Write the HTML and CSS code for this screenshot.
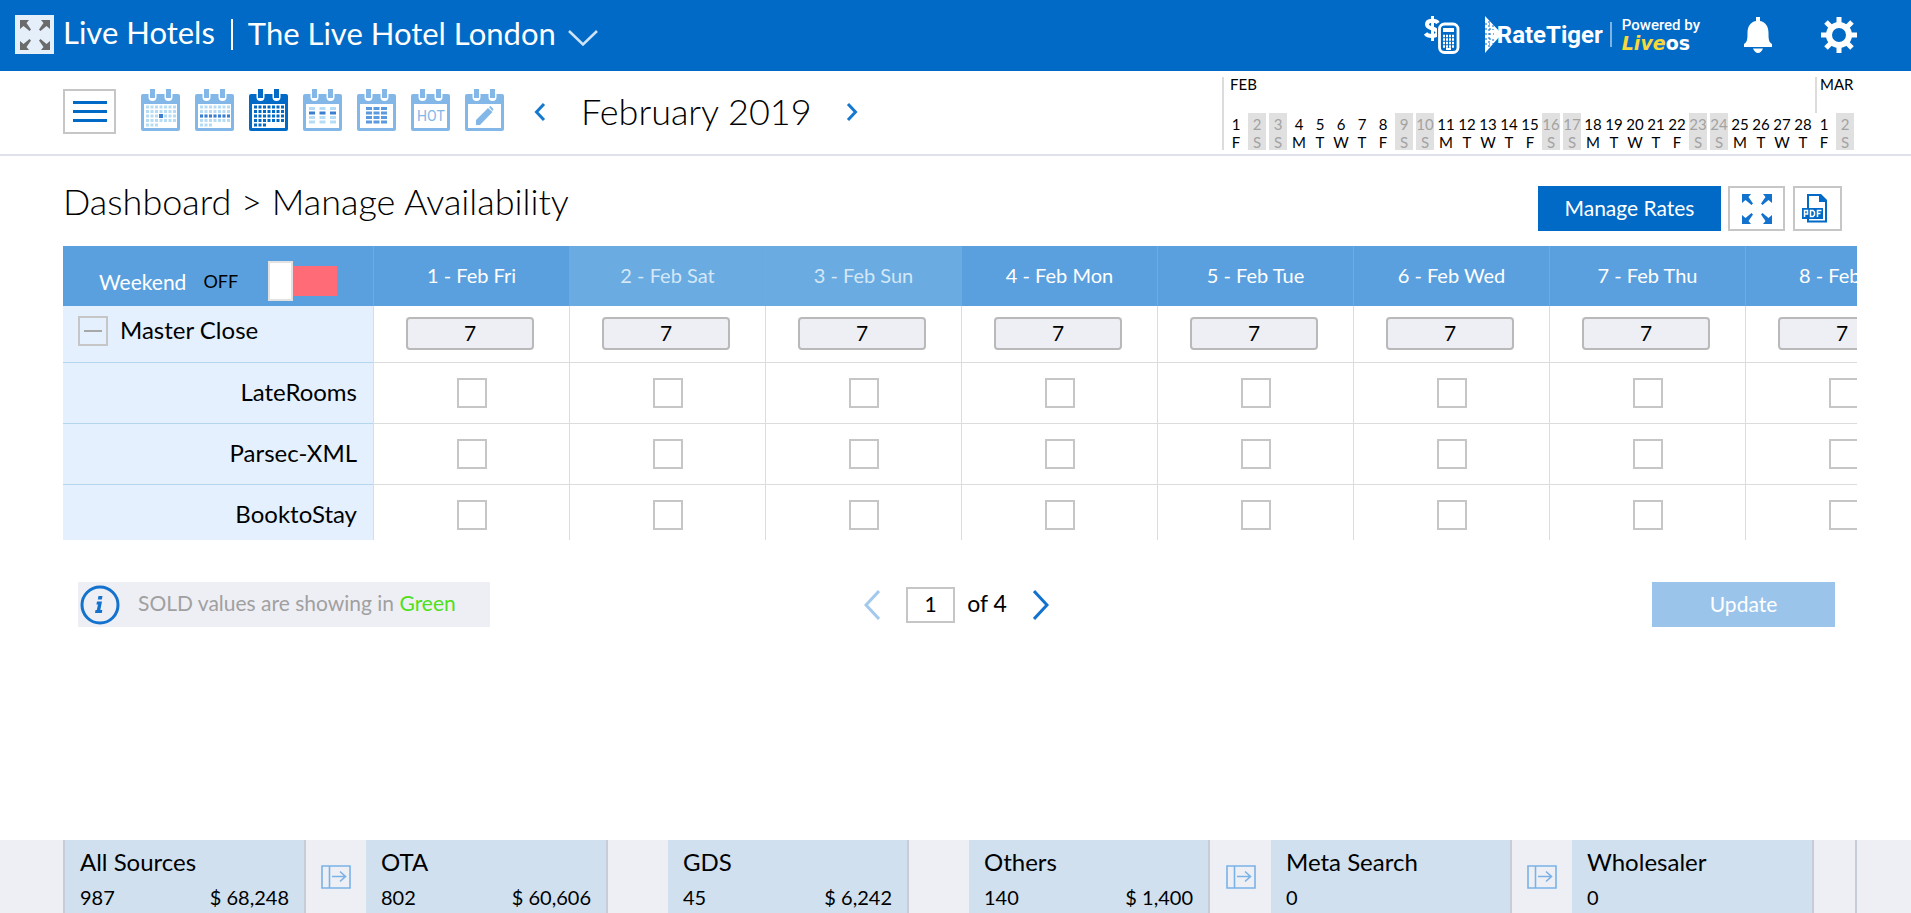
FILE: index.html
```html
<!DOCTYPE html>
<html lang="en">
<head>
<meta charset="utf-8">
<meta name="viewport" content="width=device-width, initial-scale=1">
<title>Manage Availability</title>
<link rel="stylesheet" href="styles.css">
</head>
<body>
<svg class="sprite" aria-hidden="true">
  <symbol id="expand" viewBox="0 0 32 32">
    <path fill="currentColor" d="M1 1h9L7.500 4 12 10.500 10.500 12 4.500 7 1 10zM31 1h-9l2.500 3L20 10.500l1.500 1.500L27.500 7 31 10zM1 31h9l-2.500-3 4.500-6.500L10.500 20l-6 5L1 22zM31 31h-9l2.500-3L20 21.500l1.500-1.500 6 5 3.500-3z"/>
  </symbol>
  <symbol id="cal" viewBox="0 0 39 42">
    <rect y="5" width="39" height="37" rx="2" fill="currentColor"/>
    <rect x="3" y="15" width="33" height="24" fill="#fff"/>
    <path d="M11.500 3v5M27.500 3v5" stroke="#fff" stroke-width="8" stroke-linecap="round"/>
    <path d="M11.500 0v9M27.500 0v9" stroke="currentColor" stroke-width="5"/>
  </symbol>
  <symbol id="dots" viewBox="0 0 39 42">
    <g fill="none" stroke="currentColor" stroke-width="3" stroke-dasharray="3 1.500">
      <path d="M5 18h30M5 22.500h30M5 27h30M5 31.500h30M5 36h12"/>
    </g>
  </symbol>
  <symbol id="move" viewBox="0 0 30 24">
    <path d="M1 1h28v22H1zM8.500 1v22M11 11.500h13M19 6.500l5.500 5-5.500 5" fill="none" stroke="#79b2e6" stroke-width="1.600"/>
  </symbol>
</svg>

<header class="topbar">
  <button class="box-icon" aria-label="Full screen"><svg width="32" height="32"><use href="#expand"/></svg></button>
  <span class="group-name">Live Hotels</span>
  <button class="hotel">The Live Hotel London
    <svg width="30" height="16" viewBox="0 0 30 16" fill="none" stroke="#cfe3f6" stroke-width="2.500"><path d="M1 1l14 13.500L29 1"/></svg>
  </button>
  <div class="top-right">
    <button class="plain" aria-label="Rate calculator">
      <svg width="36" height="38" viewBox="0 0 36 38" fill="none" stroke="#fff">
        <path d="M14 7C12 4 3 3.500 3 8.500c0 5 10.500 3 10.500 8C13.500 21 4 21 1.500 17.500" stroke-width="4"/>
        <path d="M8.500 0v25" stroke-width="3"/>
        <rect x="13" y="6" width="23" height="32" rx="6" fill="#006ac6" stroke="none"/>
        <rect x="15.500" y="8" width="18.500" height="28.500" rx="5" stroke-width="2.800"/>
        <rect x="19" y="12" width="11" height="4" fill="#fff" stroke="none"/>
        <path d="M19 20h11M19 23.500h11M19 27h11M19 30.500h11" stroke-width="2.500" stroke-dasharray="2 1"/>
        <path d="M22 33h5" stroke-width="2"/>
      </svg>
    </button>
    <div class="brand">
      <svg width="16" height="37" viewBox="0 0 16 37"><path d="M0 0l15 16v4L0 37z" fill="#fff"/><path d="M4 5v28M8 9v5M8 23v5M0 8h5M0 13h7M0 18h9M0 23h7M0 28h5" stroke="#006ac6" stroke-width="1" stroke-dasharray="2 2"/></svg>
      <span class="brand-name">RateTiger</span>
      <span class="powered"><span>Powered by</span><span class="liveos"><i>Live</i><b>os</b></span></span>
    </div>
    <button class="plain bell" aria-label="Notifications">
      <svg width="28" height="36" viewBox="0 0 28 36" fill="#fff"><path d="M12 0h4v4c6 1 8.500 6 8.500 12 0 7 .5 9 3.500 11v3H0v-3c3-2 3.500-4 3.500-11C3.500 10 6 5 12 4zM9 31.500h10c-1 2.500-3 4.500-5 4.500s-4-2-5-4.500z"/></svg>
    </button>
    <button class="plain" aria-label="Settings">
      <svg width="36" height="36" viewBox="0 0 36 36" fill="none" stroke="#fff"><circle cx="18" cy="18" r="10" stroke-width="6"/><path d="M18 0v6M18 30v6M0 18h6M30 18h6M5 5l5 5M26 26l5 5M31 5l-5 5M10 26l-5 5" stroke-width="5"/></svg>
    </button>
  </div>
</header>

<div class="toolbar">
  <button class="outline menu" aria-label="Menu"><svg width="34" height="22" viewBox="0 0 34 22"><path d="M0 1.500h34M0 10.500h34M0 19.500h34" stroke="#006ac6" stroke-width="3"/></svg></button>
  <div class="views">
    <button class="plain" aria-label="Day view"><svg width="39" height="42"><use href="#cal"/><use href="#dots" color="#b5dbf5"/><rect x="18" y="25" width="4" height="4" fill="#3c7fd0"/></svg></button>
    <button class="plain" aria-label="Week view"><svg width="39" height="42"><use href="#cal"/><use href="#dots" color="#b5dbf5"/><path d="M5 27h30" stroke="#3c7fd0" stroke-width="3" stroke-dasharray="3 1.500"/></svg></button>
    <button class="plain current" aria-label="Month view"><svg width="39" height="42"><use href="#cal"/><use href="#dots"/></svg></button>
    <button class="plain" aria-label="Period view"><svg width="39" height="42"><use href="#cal"/><g fill="none" stroke="#b5dbf5" stroke-width="3" stroke-dasharray="6 4.500"><path d="M6 19.500h28M6 28.500h28M6 33h28"/><path d="M6 24h28" stroke="#3c7fd0"/></g></svg></button>
    <button class="plain" aria-label="Table view"><svg width="39" height="42"><use href="#cal"/><path d="M9 19.500h21M9 24h21M9 28.500h21M9 33h21" stroke="#5b9ade" stroke-width="3" stroke-dasharray="6 1.500"/></svg></button>
    <button class="plain" aria-label="Hot dates"><svg width="39" height="42"><use href="#cal"/><text class="hot" x="20" y="32" text-anchor="middle">HOT</text></svg></button>
    <button class="plain" aria-label="Edit"><svg width="39" height="42"><use href="#cal"/><path d="M11 36v-5l12-12 4.500 4L15 36zM24 18l1.500-1 3 3-1 2z" fill="currentColor"/></svg></button>
  </div>
  <button class="plain prev" aria-label="Previous month"><svg width="12" height="20" viewBox="0 0 12 20"><path d="M10 2L2.500 10l7.500 8" fill="none" stroke="#1478d0" stroke-width="3"/></svg></button>
  <span class="month">February 2019</span>
  <button class="plain" aria-label="Next month"><svg width="12" height="20" viewBox="0 0 12 20"><path d="M2 2l7.500 8L2 18" fill="none" stroke="#1478d0" stroke-width="3"/></svg></button>
  <div class="mini">
    <div class="mini-months"><span class="feb">FEB</span><span class="mar">MAR</span></div>
    <div class="mini-days">
      <span>1<br>F</span><span class="we">2<br>S</span><span class="we">3<br>S</span><span>4<br>M</span><span>5<br>T</span><span>6<br>W</span><span>7<br>T</span><span>8<br>F</span><span class="we">9<br>S</span><span class="we">10<br>S</span><span>11<br>M</span><span>12<br>T</span><span>13<br>W</span><span>14<br>T</span><span>15<br>F</span><span class="we">16<br>S</span><span class="we">17<br>S</span><span>18<br>M</span><span>19<br>T</span><span>20<br>W</span><span>21<br>T</span><span>22<br>F</span><span class="we">23<br>S</span><span class="we">24<br>S</span><span>25<br>M</span><span>26<br>T</span><span>27<br>W</span><span>28<br>T</span><span>1<br>F</span><span class="we">2<br>S</span>
    </div>
  </div>
</div>

<main>
  <div class="page-head">
    <h1>Dashboard &gt; Manage Availability</h1>
    <button class="primary">Manage Rates</button>
    <button class="outline full" aria-label="Expand table"><svg width="32" height="32"><use href="#expand"/></svg></button>
    <button class="outline pdf" aria-label="Export PDF"><svg width="26" height="30" viewBox="0 0 26 30"><path d="M6 1h12l6 6v20.500H6z" fill="#fff" stroke="#006ac6" stroke-width="2"/><path d="M17 0h2l6 6v2h-8z" fill="#006ac6"/><path d="M0 14h21v11H0z" fill="#006ac6"/><path d="M2.500 23v-6.500h3v3.500h-3M8.500 16.500h2.500l1.500 1.500v3L11 22.500H8.500zM15.500 23v-6.500h4M15.500 19.500h3" fill="none" stroke="#fff" stroke-width="1.500"/></svg></button>
  </div>

  <div class="grid-view">
    <table>
      <thead>
        <tr>
          <th class="corner"><label class="weekend"><span>Weekend</span><span class="state">OFF</span><input type="checkbox" role="switch" class="switch"></label></th>
          <th>1 - Feb Fri</th><th class="we">2 - Feb Sat</th><th class="we">3 - Feb Sun</th><th>4 - Feb Mon</th><th>5 - Feb Tue</th><th>6 - Feb Wed</th><th>7 - Feb Thu</th><th>8 - Feb Fri</th>
        </tr>
      </thead>
      <tbody>
        <tr class="master">
          <th><div class="master-label"><button class="collapse" aria-label="Collapse"></button><span>Master Close</span></div></th>
          <td><input class="count" aria-label="Master close 1 Feb" value="7"></td><td><input class="count" aria-label="Master close 2 Feb" value="7"></td><td><input class="count" aria-label="Master close 3 Feb" value="7"></td><td><input class="count" aria-label="Master close 4 Feb" value="7"></td><td><input class="count" aria-label="Master close 5 Feb" value="7"></td><td><input class="count" aria-label="Master close 6 Feb" value="7"></td><td><input class="count" aria-label="Master close 7 Feb" value="7"></td><td><input class="count" aria-label="Master close 8 Feb" value="7"></td>
        </tr>
        <tr>
          <th>LateRooms</th>
          <td><input type="checkbox" class="tick" aria-label="LateRooms 1 Feb"></td><td><input type="checkbox" class="tick" aria-label="LateRooms 2 Feb"></td><td><input type="checkbox" class="tick" aria-label="LateRooms 3 Feb"></td><td><input type="checkbox" class="tick" aria-label="LateRooms 4 Feb"></td><td><input type="checkbox" class="tick" aria-label="LateRooms 5 Feb"></td><td><input type="checkbox" class="tick" aria-label="LateRooms 6 Feb"></td><td><input type="checkbox" class="tick" aria-label="LateRooms 7 Feb"></td><td><input type="checkbox" class="tick" aria-label="LateRooms 8 Feb"></td>
        </tr>
        <tr>
          <th>Parsec-XML</th>
          <td><input type="checkbox" class="tick" aria-label="Parsec-XML 1 Feb"></td><td><input type="checkbox" class="tick" aria-label="Parsec-XML 2 Feb"></td><td><input type="checkbox" class="tick" aria-label="Parsec-XML 3 Feb"></td><td><input type="checkbox" class="tick" aria-label="Parsec-XML 4 Feb"></td><td><input type="checkbox" class="tick" aria-label="Parsec-XML 5 Feb"></td><td><input type="checkbox" class="tick" aria-label="Parsec-XML 6 Feb"></td><td><input type="checkbox" class="tick" aria-label="Parsec-XML 7 Feb"></td><td><input type="checkbox" class="tick" aria-label="Parsec-XML 8 Feb"></td>
        </tr>
        <tr>
          <th>BooktoStay</th>
          <td><input type="checkbox" class="tick" aria-label="BooktoStay 1 Feb"></td><td><input type="checkbox" class="tick" aria-label="BooktoStay 2 Feb"></td><td><input type="checkbox" class="tick" aria-label="BooktoStay 3 Feb"></td><td><input type="checkbox" class="tick" aria-label="BooktoStay 4 Feb"></td><td><input type="checkbox" class="tick" aria-label="BooktoStay 5 Feb"></td><td><input type="checkbox" class="tick" aria-label="BooktoStay 6 Feb"></td><td><input type="checkbox" class="tick" aria-label="BooktoStay 7 Feb"></td><td><input type="checkbox" class="tick" aria-label="BooktoStay 8 Feb"></td>
        </tr>
      </tbody>
    </table>
  </div>

  <div class="below">
    <p class="note">
      <svg width="40" height="40" viewBox="0 0 40 40"><circle cx="20" cy="20" r="18" fill="none" stroke="#1272cd" stroke-width="3"/><path d="M18.500 11h4l-.7 3.500h-4zM17 16.500h5L20.300 25h2l-.5 3H15l.5-3h1.300l1.200-5.500h-1.600z" fill="#1272cd"/></svg>
      <span>SOLD values are showing in <em>Green</em></span>
    </p>
    <div class="pager">
      <button class="plain" aria-label="Previous page"><svg width="16" height="30" viewBox="0 0 16 30"><path d="M15 1L2 15l13 14" fill="none" stroke="#a3c9ec" stroke-width="3"/></svg></button>
      <label class="pages"><input class="page" value="1" aria-label="Page"><span>of 4</span></label>
      <button class="plain" aria-label="Next page"><svg width="16" height="30" viewBox="0 0 16 30"><path d="M1 1l13 14L1 29" fill="none" stroke="#1272cd" stroke-width="3"/></svg></button>
    </div>
    <button class="primary update" disabled>Update</button>
  </div>
</main>

<footer class="sources">
  <section class="card first"><h2>All Sources</h2><p><span>987</span><span>$ 68,248</span></p></section>
  <span class="gap"><svg width="30" height="24"><use href="#move"/></svg></span>
  <section class="card"><h2>OTA</h2><p><span>802</span><span>$ 60,606</span></p></section>
  <span class="gap"></span>
  <section class="card"><h2>GDS</h2><p><span>45</span><span>$ 6,242</span></p></section>
  <span class="gap"></span>
  <section class="card"><h2>Others</h2><p><span>140</span><span>$ 1,400</span></p></section>
  <span class="gap"><svg width="30" height="24"><use href="#move"/></svg></span>
  <section class="card"><h2>Meta Search</h2><p><span>0</span></p></section>
  <span class="gap"><svg width="30" height="24"><use href="#move"/></svg></span>
  <section class="card"><h2>Wholesaler</h2><p><span>0</span></p></section>
  <span class="gap end"></span>
</footer>
</body>
</html>
```
FILE: styles.css
```css
*, *::before { box-sizing: border-box; }
body {
  margin: 0;
  min-height: 100vh;
  display: flex;
  flex-direction: column;
  background: #fff;
  color: #000;
  font-family: Lato, "Open Sans", sans-serif;
  font-size: 21px;
}
button, input { font: inherit; color: inherit; }
button { padding: 0; border: 0; background: none; }
svg { display: block; flex: none; }
h1, h2, p { margin: 0; font-weight: inherit; }
.sprite { position: absolute; width: 0; height: 0; }
.plain { flex: none; }
.outline {
  display: flex;
  align-items: center;
  justify-content: center;
  height: 45px;
  border: 2px solid #c6c6c6;
  background: #fff;
  color: #1272cd;
}

/* top bar */
.topbar {
  display: flex;
  align-items: center;
  height: 71px;
  padding: 0 54px 2px 15px;
  background: #006ac6;
  color: #fff;
  font-size: 31px;
}
.box-icon {
  display: flex;
  align-items: center;
  justify-content: center;
  width: 39px;
  height: 39px;
  background: #e4eff9;
  color: #6b6b6b;
}
.group-name {
  margin-left: 9px;
  padding: 0 18px 4px 0;
  background: linear-gradient(#fff, #fff) right center / 2px 31px no-repeat;
  line-height: 33px;
}
.hotel { display: flex; align-items: center; gap: 12px; margin-left: 15px; padding-bottom: 4px; }
.hotel svg { margin-top: 10px; }
.top-right { display: flex; align-items: center; margin-left: auto; }
.brand { display: flex; align-items: center; margin-left: 25px; font-family: Roboto, sans-serif; }
.brand-name { margin-left: -4px; font-size: 24px; font-weight: 700; }
.powered {
  display: flex;
  flex-direction: column;
  margin-left: 7px;
  padding-left: 12px;
  background: linear-gradient(#7fb4e2, #7fb4e2) left center / 2px 25px no-repeat;
  font-size: 15px;
  font-weight: 500;
  line-height: 16px;
}
.liveos { font: 700 19px/20px "DejaVu Sans", sans-serif; }
.liveos i { color: #f7d83b; }
.bell { margin: 0 49px 0 44px; }

/* toolbar */
.toolbar {
  display: flex;
  align-items: flex-start;
  min-height: 85px;
  padding: 6px 54px 0 63px;
  border-bottom: 2px solid #dfe1ed;
}
.menu { width: 53px; margin-top: 12px; }
.views { display: flex; gap: 15px; margin: 12px 30px 0 25px; color: #82b7e8; }
.current { color: #006ac6; }
.hot { font: 14px Roboto, sans-serif; fill: #82b7e8; }
.prev, .month + .plain { margin-top: 25px; }
.month { margin: 12px 34px 0 35px; font-size: 36px; font-weight: 300; line-height: 44px; }
.mini { margin-left: auto; border-left: 2px solid #dcdcdc; font-size: 15px; line-height: 18px; }
.mini-months { display: flex; justify-content: space-between; height: 36px; line-height: 14px; }
.feb { padding-left: 6px; }
.mar { width: 42px; padding-left: 3px; border-left: 2px solid #dcdcdc; }
.mini-days { display: flex; gap: 3px; margin-left: 3px; padding-right: 3px; text-align: center; }
.mini-days span { width: 18px; height: 37px; padding-top: 2px; display: flex; flex-direction: column; align-items: center; white-space: nowrap; }
.mini-days .we { background: #e0e0e0; color: #a3a3a3; }

/* page */
main { flex: 1; padding: 0 54px 0 63px; }
.page-head { display: flex; align-items: center; height: 90px; padding-right: 15px; }
h1 { margin-right: auto; font-size: 36px; font-weight: 300; }
.page-head button { margin-top: 15px; }
.primary { width: 183px; height: 45px; padding-bottom: 2px; background: #006ac6; color: #fff; }
.full { width: 57px; margin-left: 7px; }
.pdf { width: 49px; margin-left: 8px; padding-right: 6px; }

.grid-view { max-height: 294px; overflow: hidden; }
table { width: 1878px; table-layout: fixed; border-collapse: separate; border-spacing: 0; }
th { font-weight: 400; padding: 0; }
thead th { height: 60px; padding-bottom: 2px; background: #5aa0de; color: #fff; border-left: 1px solid #6aade3; font-size: 20px; }
thead .we { background: #6aace2; color: #d3e7f7; }
thead .corner { width: 310px; padding: 0; border-left: 0; }
.weekend { display: flex; align-items: center; height: 60px; padding: 10px 36px 0 36px; font-size: 21px; }
.state { margin-left: 17px; color: #000; font-size: 18px; }
.switch {
  appearance: none;
  flex: none;
  width: 69px;
  height: 40px;
  margin: 0 0 0 auto;
  background: linear-gradient(#ff6b76, #ff6b76) right center / 44px 30px no-repeat;
}
.switch::before {
  content: "";
  display: block;
  width: 25px;
  height: 40px;
  border: 2px solid #e2e2e2;
  background: #fff;
}
tbody th {
  height: 61px;
  padding: 0 16px 4px 0;
  background: #e4f0fe;
  border-bottom: 1px solid #b4d6ee;
  font-size: 24px;
  text-align: right;
}
tbody .master th { height: 57px; padding: 0 15px; }
.master-label { display: flex; align-items: center; gap: 12px; padding-bottom: 6px; }
.master-label span { padding-bottom: 4px; }
.collapse {
  width: 30px;
  height: 30px;
  border: 2px solid #c6c6c6;
  background: linear-gradient(#a8a8a8, #a8a8a8) center / 18px 2px no-repeat;
}
td {
  padding: 0;
  border-left: 1px solid #dcdcdc;
  border-bottom: 1px solid #dcdcdc;
  text-align: center;
}
.count {
  display: block;
  width: 128px;
  height: 33px;
  margin: 0 auto 2px 32px;
  padding: 0 0 2px;
  border: 2px solid #b9b9b9;
  border-radius: 4px;
  background: #eeeff5;
  text-align: center;
}
.tick {
  appearance: none;
  display: block;
  width: 30px;
  height: 30px;
  margin: 0 auto;
  border: 2px solid #c6c6c6;
  background: #fff;
}

.below { display: grid; grid-template-columns: 1fr auto 1fr; align-items: center; padding: 42px 22px 0 15px; }
.note { display: flex; align-items: center; gap: 18px; width: 412px; height: 45px; padding-left: 2px; background: #eeeff5; color: #a0a0a0; }
.note span { padding-bottom: 4px; }
.note em { color: #4fe01a; font-style: normal; }
.pager { display: flex; align-items: center; gap: 26px; }
.pages { display: flex; align-items: center; gap: 12px; font-size: 23px; }
.pages span { padding-bottom: 4px; }
.page { width: 49px; height: 36px; padding: 0 0 2px; border: 2px solid #c6c6c6; background: #fff; font-size: 21px; text-align: center; }
.update { justify-self: end; background: #9bc4ea; }

/* sources */
.sources {
  display: grid;
  grid-template-columns: 243fr 60fr 242fr 60fr 241fr 60fr 241fr 61fr 241fr 60fr 242fr 43fr;
  padding: 0 54px 0 63px;
  background: #eeeff5;
}
.card { padding: 7px 15px 0 15px; border-right: 2px solid #c8ccd6; background: #d0e0ef; }
.first { border-left: 2px solid #c8ccd6; }
.card h2 { font-size: 24px; line-height: 30px; }
.card p { display: flex; justify-content: space-between; padding-top: 5px; font-size: 20px; line-height: 31px; }
.gap { display: flex; align-items: center; justify-content: center; }
.end { border-right: 2px solid #c8ccd6; }
```
